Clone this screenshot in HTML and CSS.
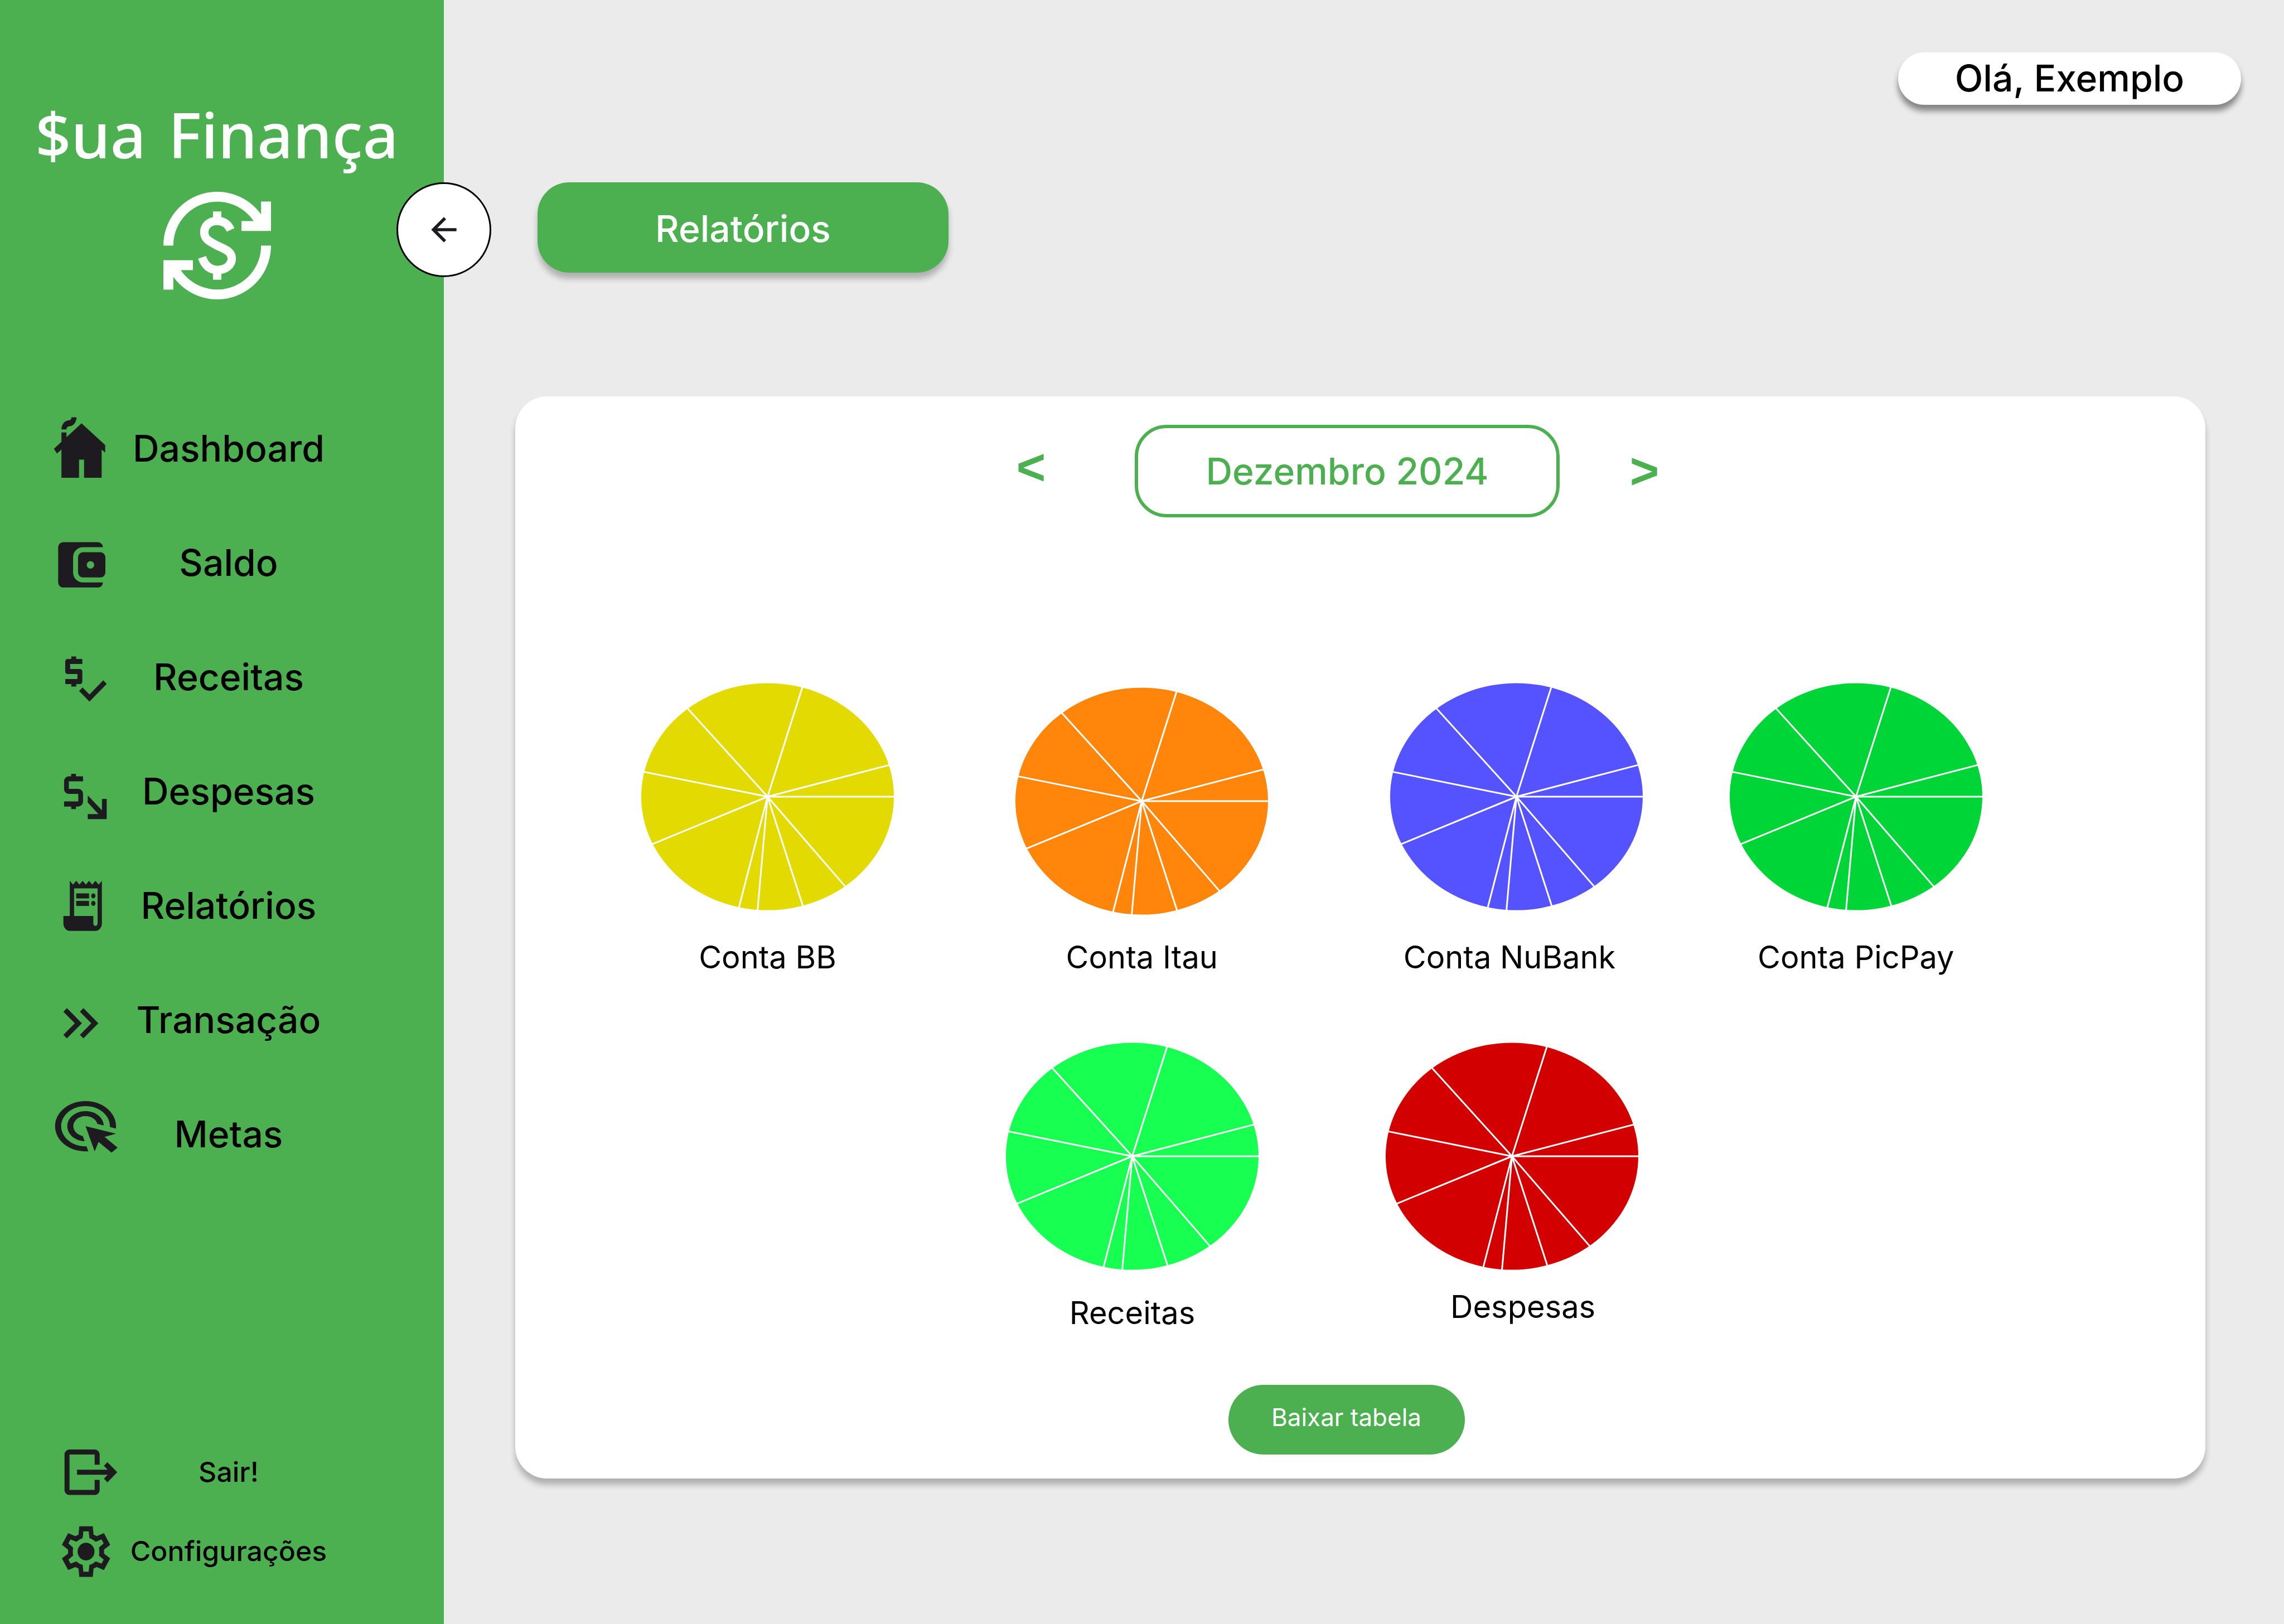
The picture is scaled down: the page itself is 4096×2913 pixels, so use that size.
FILE: index.html
```html
<!DOCTYPE html>
<html lang="pt-BR">
<head>
<meta charset="utf-8">
<meta name="viewport" content="width=device-width, initial-scale=1">
<title>Sua Finança - Relatórios</title>
<link rel="stylesheet" href="styles.css">
</head>
<body>
<svg class="defs" aria-hidden="true">
  <symbol id="pie" viewBox="-227 -204 454 408">
    <ellipse rx="227" ry="204" fill="currentColor"/>
    <path d="M0 0H228M0 0 219-57M0 0 63-198M0 0-145-160M0 0-224-45M0 0-209 86M0 0-52 201M0 0-18 205M0 0 64 198M0 0 141 163" fill="none" stroke="#fff" stroke-width="3"/>
  </symbol>
</svg>
<div class="app">
  <aside class="sidebar">
    <div class="brand">
      <span class="brand__name"><span>$ua</span> <span>Finança</span></span>
      <svg class="brand__icon" viewBox="-96 -96 192 192" aria-hidden="true">
        <path id="cycle" d="M-96 0A96 96 0 0 1 78.3-55.6V-78.5H96V-26H43.3V-43.8H65A78.3 78.3 0 0 0-78.3 0z" fill="#fff"/>
        <use href="#cycle" transform="rotate(180)"/>
        <path d="M24-28C19-39 11-44 0-44C-14-44-23-35-23-24C-23-12-15-8-2-1C14 7 26 10 26 23C26 35 15 43.5 1 43.5C-13 43.5-22 36-27 21M0-61V-44M0 44V61" fill="none" stroke="#fff" stroke-width="15"/>
      </svg>
    </div>
    <button class="collapse" type="button" aria-label="Recolher menu">
      <svg viewBox="0 -960 960 960" aria-hidden="true"><path d="m313-440 224 224-57 56-320-320 320-320 57 56-224 224h487v80H313Z"/></svg>
    </button>
    <nav class="menu">
      <a class="menu__item" href="#dashboard">
        <svg class="menu__icon" viewBox="-.04 .17 27.52 22.1" preserveAspectRatio="none" aria-hidden="true"><path d="M12 3 6 7.58V6H4v3.11L1 11.4l1.21 1.59L4 11.62V21h7v-6h2v6h7v-9.38l1.4 1.06v-2.5zM10 1c0 1.66-1.34 3-3 3-.55 0-1 .45-1 1H4c0-1.66 1.34-3 3-3 .55 0 1-.45 1-1z"/></svg>
        <span class="menu__label">Dashboard</span>
      </a>
      <a class="menu__item" href="#saldo">
        <svg class="menu__icon" viewBox=".24 -2.2 27.82 26.55" preserveAspectRatio="none" aria-hidden="true"><path fill-rule="evenodd" d="M5 21q-.825 0-1.412-.587T3 19V5q0-.825.588-1.412T5 3h14q.825 0 1.413.588T21 5h-8q-1.65 0-2.825 1.175T9 9v6q0 1.65 1.175 2.825T13 19h8q0 .825-.587 1.413T19 21zM13 17q-.825 0-1.412-.587T11 15V9q0-.825.588-1.412T13 7h7q.825 0 1.413.588T22 9v6q0 .825-.587 1.413T20 17zM16 10.500a1.500 1.500 0 1 0 0 3 1.500 1.500 0 0 0 0-3z"/></svg>
        <span class="menu__label">Saldo</span>
      </a>
      <a class="menu__item" href="#receitas">
        <svg class="menu__icon" viewBox="-1.71 -2.22 28.34 26.67" preserveAspectRatio="none" aria-hidden="true"><path d="M11 13V9c0-.55-.45-1-1-1H6V6h5V4H8.500V3h-2v1H5c-.55 0-1 .45-1 1v4c0 .55.45 1 1 1h4v2H4v2h2.500v1h2v-1H10c.55 0 1-.45 1-1zM19.590 12.520l-5.660 5.650-2.830-2.830-1.410 1.420L13.930 21 21 13.930z"/></svg>
        <span class="menu__label">Receitas</span>
      </a>
      <a class="menu__item" href="#despesas">
        <svg class="menu__icon" viewBox="-2.4 -3.39 29.2 26.55" preserveAspectRatio="none" aria-hidden="true"><path d="M5 6h6V4H8V3H6v1H5C3.900 4 3 4.900 3 6v3c0 1.100.9 2 2 2h4v3H3v2h3v1h2v-1h1c1.100 0 2-.9 2-2v-3c0-1.100-.9-2-2-2H5zM13 11.600l6 5.900V13h2v8h-8v-2h4.500L13 14.400z"/></svg>
        <span class="menu__label">Despesas</span>
      </a>
      <a class="menu__item" href="#relatorios" aria-current="page">
        <svg class="menu__icon" viewBox="-2.66 -1.53 32.35 26.67" preserveAspectRatio="none" aria-hidden="true"><path fill-rule="evenodd" d="M19.500 3.500 18 2l-1.500 1.500L15 2l-1.500 1.500L12 2l-1.500 1.500L9 2 7.500 3.500 6 2v14H3v3c0 1.660 1.340 3 3 3h12c1.660 0 3-1.340 3-3V2zM19 19c0 .55-.45 1-1 1s-1-.45-1-1v-3H8V5h11z"/><path d="M9 7h6v2H9zM9 10h6v2H9z"/><circle cx="17" cy="8" r="1"/><circle cx="17" cy="11" r="1"/></svg>
        <span class="menu__label">Relatórios</span>
      </a>
      <a class="menu__item" href="#transacao">
        <svg class="menu__icon" viewBox="6.200 -1067.800 1107 1062" preserveAspectRatio="none" aria-hidden="true"><path d="M383-480 200-664l56-56 240 240-240 240-56-56 183-184Zm264 0L464-664l56-56 240 240-240 240-56-56 183-184Z"/></svg>
        <span class="menu__label">Transação</span>
      </a>
      <a class="menu__item" href="#metas">
        <svg class="menu__icon" viewBox=".76 1.8 22.69 26.57" preserveAspectRatio="none" aria-hidden="true"><path d="M11.71,17.99C8.53,17.84,6,15.22,6,12c0-3.31,2.69-6,6-6c3.22,0,5.84,2.53,5.99,5.71l-2.1-0.63C15.48,9.31,13.89,8,12,8c-2.21,0-4,1.79-4,4c0,1.89,1.31,3.48,3.08,3.89L11.71,17.99z M22,12c0,0.3-0.01,0.6-0.04,0.9l-1.97-0.59C20,12.21,20,12.1,20,12c0-4.42-3.58-8-8-8s-8,3.58-8,8s3.58,8,8,8c0.1,0,0.21,0,0.31-0.01l0.59,1.97C12.6,21.99,12.3,22,12,22C6.48,22,2,17.52,2,12C2,6.48,6.48,2,12,2S22,6.48,22,12z M18.23,16.26L22,15l-10-3l3,10l1.26-3.77l4.27,4.27l1.98-1.98L18.23,16.26z"/></svg>
        <span class="menu__label">Metas</span>
      </a>
    </nav>
    <nav class="menu menu--footer" aria-label="Conta">
      <a class="menu__item" href="#sair">
        <svg class="menu__icon" viewBox="-2.27 -1.41 27.56 26.47" preserveAspectRatio="none" aria-hidden="true"><path d="M5 21c-1.100 0-2-.9-2-2V5c0-1.100.9-2 2-2h10c1.100 0 2 .9 2 2v4h-2V5H5v14h10v-4h2v4c0 1.100-.9 2-2 2zM20.100 16l-1.400-1.450L20.200 13H8v-2h12.200l-1.500-1.550L20.100 8 24 12z"/></svg>
        <span class="menu__label">Sair!</span>
      </a>
      <a class="menu__item" href="#configuracoes">
        <svg class="menu__icon" viewBox="-14.39 -13.49 28.64 26.49" preserveAspectRatio="none" aria-hidden="true"><path fill-rule="evenodd" d="M-2.800-10H2.800L3.100-6.700Q3.800-6.500 4.400-6.100L7.400-7.300 10-2.700 7.450-.8V.8L10 2.700 7.400 7.300 4.400 6.100Q3.800 6.500 3.100 6.700L2.800 10H-2.800L-3.100 6.700Q-3.800 6.500-4.400 6.100L-7.400 7.300-10 2.700-7.450.8V-.8L-10-2.700-7.400-7.300-4.400-6.100Q-3.800-6.500-3.100-6.700ZM-1.100-8-1.400-5.300Q-2.900-4.900-4-3.900L-6.400-4.800-7.300-3.200-5.350-1.550Q-5.600 0-5.350 1.550L-7.300 3.200-6.400 4.800-4 3.900Q-2.900 4.900-1.400 5.300L-1.100 8H1.100L1.400 5.300Q2.900 4.900 4 3.900L6.400 4.800 7.300 3.200 5.350 1.550Q5.600 0 5.350-1.550L7.300-3.200 6.400-4.800 4-3.900Q2.900-4.900 1.400-5.300L1.100-8Z"/><circle r="3.500"/></svg>
        <span class="menu__label">Configurações</span>
      </a>
    </nav>
  </aside>

  <main class="content">
    <header class="topbar">
      <p class="user">Olá, Exemplo</p>
    </header>
    <h1 class="title">Relatórios</h1>
    <section class="panel">
      <div class="month">
        <button class="month__step month__step--prev" type="button" aria-label="Mês anterior">&lt;</button>
        <h2 class="month__name">Dezembro 2024</h2>
        <button class="month__step" type="button" aria-label="Próximo mês">&gt;</button>
      </div>
      <div class="charts charts--accounts">
        <figure class="chart chart--bb">
          <svg class="chart__pie" aria-hidden="true"><use href="#pie"/></svg>
          <figcaption>Conta BB</figcaption>
        </figure>
        <figure class="chart chart--itau">
          <svg class="chart__pie" aria-hidden="true"><use href="#pie"/></svg>
          <figcaption>Conta Itau</figcaption>
        </figure>
        <figure class="chart chart--nubank">
          <svg class="chart__pie" aria-hidden="true"><use href="#pie"/></svg>
          <figcaption>Conta NuBank</figcaption>
        </figure>
        <figure class="chart chart--picpay">
          <svg class="chart__pie" aria-hidden="true"><use href="#pie"/></svg>
          <figcaption>Conta PicPay</figcaption>
        </figure>
      </div>
      <div class="charts charts--totals">
        <figure class="chart chart--income">
          <svg class="chart__pie" aria-hidden="true"><use href="#pie"/></svg>
          <figcaption>Receitas</figcaption>
        </figure>
        <figure class="chart chart--expense">
          <svg class="chart__pie" aria-hidden="true"><use href="#pie"/></svg>
          <figcaption>Despesas</figcaption>
        </figure>
      </div>
      <button class="download" type="button">Baixar tabela</button>
    </section>
  </main>
</div>
</body>
</html>
```
FILE: styles.css
```css
:root {
  --green: #4caf50;
  --ink: #1d1b20;
  --radius: 57px;
  --shadow: 0 11px 11px rgba(0, 0, 0, .25);
}

* {
  box-sizing: border-box;
}

body {
  margin: 0;
  background: #ebebeb;
  color: #000;
  font-family: Inter, "Liberation Sans", sans-serif;
  font-size: 66px;
  font-weight: 500;
}

button {
  border: 0;
  padding: 0;
  font: inherit;
  cursor: pointer;
}

h1, h2, p, figure {
  margin: 0;
  font-size: inherit;
  font-weight: inherit;
}

.defs {
  position: absolute;
  width: 0;
  height: 0;
}

.app {
  display: flex;
  min-height: 100vh;
}

/* Sidebar */
.sidebar {
  position: relative;
  flex: none;
  display: flex;
  flex-direction: column;
  width: 796px;
  padding: 165px 0 61px;
  background: var(--green);
}

.brand {
  display: flex;
  flex-direction: column;
  align-items: center;
  gap: 27px;
  padding-right: 18px;
  color: #fff;
}

.brand__name {
  display: flex;
  gap: 40px;
  font-family: "Noto Sans", sans-serif;
  font-size: 112px;
  font-weight: 500;
  line-height: 152px;
  white-space: nowrap;
}

.brand__icon {
  width: 193px;
  height: 193px;
}

/* Sits across the edge between the sidebar and the content */
.collapse {
  position: absolute;
  top: 327px;
  right: -85px;
  display: grid;
  place-items: center;
  width: 170px;
  height: 170px;
  border: 3px solid #000;
  border-radius: 50%;
  background: #fff;
}

.collapse svg {
  width: 68px;
  height: 68px;
  fill: var(--ink);
}

.menu {
  margin-top: 164px;
}

.menu__item {
  display: flex;
  align-items: center;
  height: 205px;
  padding: 0 192px 0 92px;
  color: inherit;
  text-decoration: none;
}

.menu__icon {
  flex: none;
  width: 124px;
  height: 120px;
  fill: var(--ink);
}

.menu__label {
  flex: 1;
  text-align: center;
  white-space: nowrap;
}

.menu--footer {
  margin-top: auto;
  font-size: 50px;
}

.menu--footer .menu__item {
  height: 142px;
}

/* Content */
.content {
  flex: 1;
  min-width: 0;
  padding: 94px 141px 262px 128px;
}

.topbar {
  display: flex;
  justify-content: flex-end;
  margin-right: -64px;
}

.user {
  width: 615px;
  padding-bottom: 2px;
  border-radius: 47px;
  background: #fff;
  box-shadow: 0 11px 11px rgba(0, 0, 0, .44);
  line-height: 92px;
  text-align: center;
}

.title {
  width: 737px;
  margin: 139px 0 222px 40px;
  padding-top: 4px;
  border-radius: var(--radius);
  background: var(--green);
  box-shadow: var(--shadow);
  color: #fff;
  line-height: 158px;
  text-align: center;
}

.panel {
  display: flex;
  flex-direction: column;
  padding: 51px 0 43px;
  border-radius: var(--radius);
  background: #fff;
  box-shadow: var(--shadow);
}

.month {
  display: flex;
  justify-content: center;
  align-items: center;
  padding-right: 81px;
  color: var(--green);
}

.month__name {
  width: 762px;
  margin: 0 112px 0 146px;
  border: 6px solid var(--green);
  border-radius: var(--radius);
  line-height: 154px;
  text-align: center;
}

.month__step {
  width: 80px;
  background: none;
  color: inherit;
  font-family: "Liberation Sans", sans-serif;
  font-size: 90px;
  font-weight: 700;
  line-height: 100px;
}

.month__step--prev {
  padding-bottom: 14px;
}

.charts {
  display: grid;
  font-size: 56px;
  font-weight: 400;
  line-height: 70px;
}

.charts--accounts {
  grid-template-columns: 671fr 671fr 609fr 453fr;
  margin: 297px 400px 0 226px;
}

.charts--totals {
  grid-template-columns: 680fr 453fr;
  margin: 118px 1017px 0 880px;
}

.chart {
  display: flex;
  flex-direction: column;
  gap: 49px;
  width: 453px;
  text-align: center;
}

.chart__pie {
  width: 453px;
  height: 408px;
}

.chart--bb .chart__pie { color: #e2da00; }
.chart--itau .chart__pie { color: #ff860b; }
.chart--nubank .chart__pie { color: #5553ff; }
.chart--picpay .chart__pie { color: #00d537; }
.chart--income .chart__pie { color: #17ff51; }
.chart--expense .chart__pie { color: #d30000; }

.chart--itau {
  gap: 41px;
  padding-top: 8px;
}

.chart--nubank figcaption {
  padding-right: 24px;
}

.chart--income {
  gap: 42px;
}

.chart--expense {
  gap: 31px;
}

.chart--expense figcaption {
  padding-left: 40px;
}

.download {
  align-self: center;
  width: 424px;
  height: 125px;
  margin: 94px 50px 0 0;
  padding-bottom: 10px;
  border-radius: 63px;
  background: var(--green);
  color: #fff;
  font-size: 44px;
  font-weight: 400;
}
```
